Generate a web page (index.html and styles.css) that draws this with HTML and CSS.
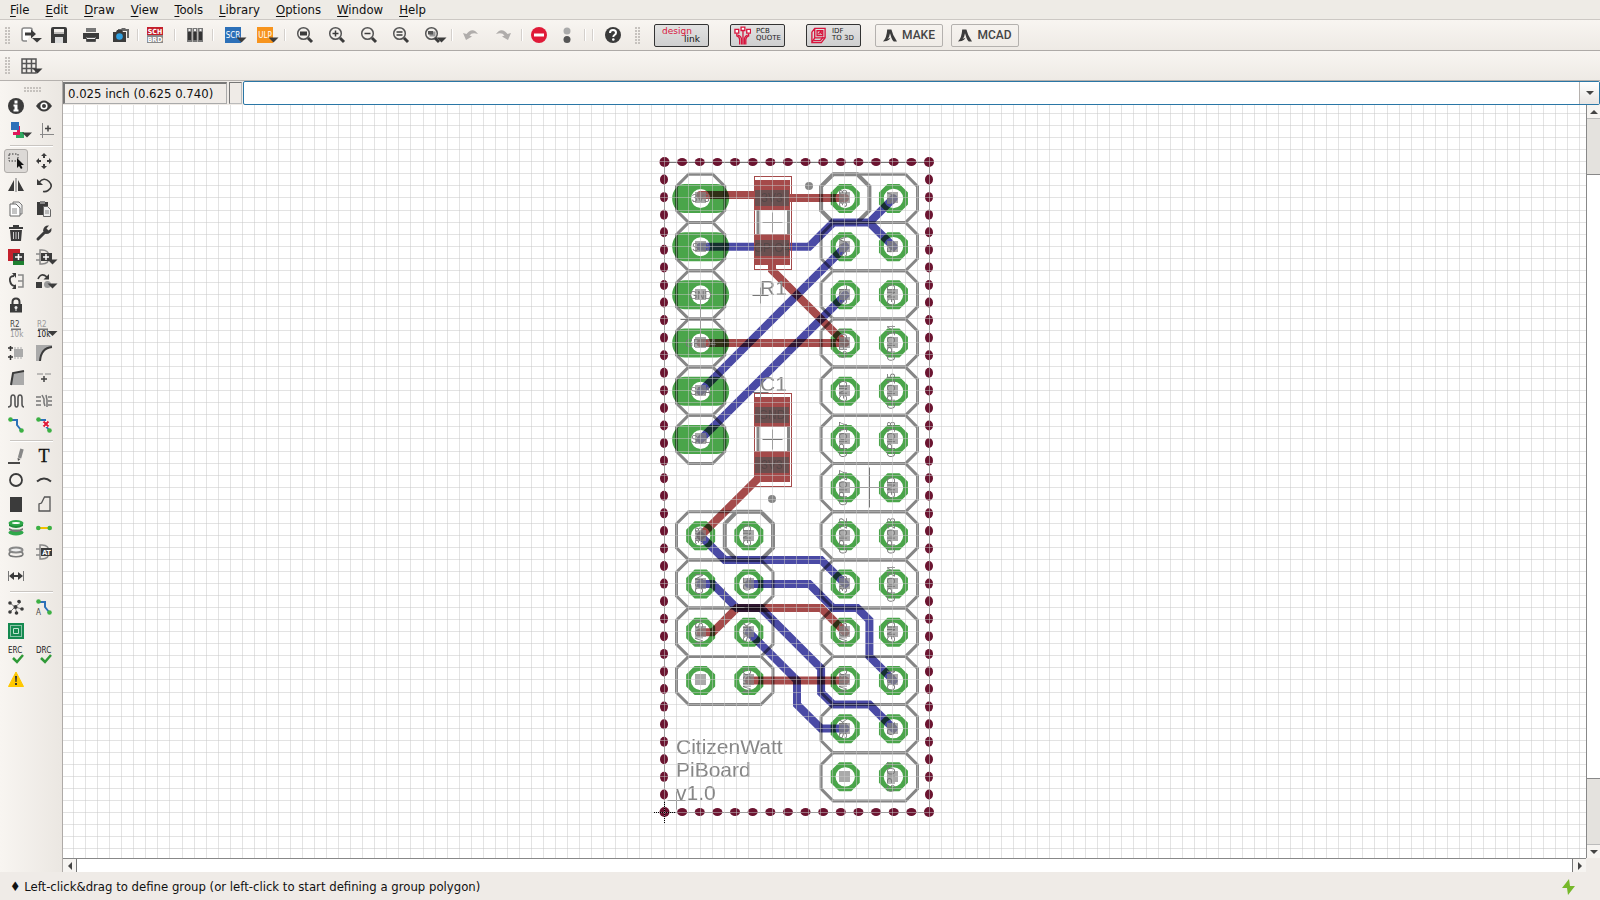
FILE: index.html
```html
<!DOCTYPE html>
<html lang="en">
<head>
<meta charset="utf-8">
<title>Board editor</title>
<link rel="stylesheet" href="styles.css">
</head>
<body>
<div class="app">
  <nav class="menubar">
    <button><u>F</u>ile</button><button><u>E</u>dit</button><button><u>D</u>raw</button><button><u>V</u>iew</button><button><u>T</u>ools</button><button><u>L</u>ibrary</button><button><u>O</u>ptions</button><button><u>W</u>indow</button><button><u>H</u>elp</button>
  </nav>

  <div class="toolbar main">
    <span class="grip"></span>
    <button class="tb narrow" aria-label="Open"><svg class="ic" viewBox="0 0 16 16"><path d="M11 4V2.500Q11 1 9 1H3Q1 1 1 3V12Q1 14 3 14H6" fill="#fff" stroke="#888" stroke-width="1.500"/><path d="M4 5.500h6V2.500l5 4.500-5 4.500V8.500H4z"/><path d="M11 11h10l-5 4.500z"/></svg></button>
    <button class="tb" aria-label="Save"><svg class="ic" viewBox="0 0 16 16"><path d="M2 0h12q2 0 2 2v14H0V2Q0 0 2 0z"/><path d="M3 2h10v5H3z" fill="#f3f0ec"/><path d="M4 10h8v6H4z" fill="#ddd"/><path d="M3 5.500h10v1H3z" fill="#888"/></svg></button>
    <button class="tb" aria-label="Print"><svg class="ic" viewBox="0 0 16 16"><path d="M3 1h10v4H3z" fill="#777"/><path d="M0 6h16v6h-3v-2H3v2H0z"/><path d="M3.500 10.500h9v4h-9z" fill="#eee" stroke="#555"/><path d="M4 12h8v2H4z"/></svg></button>
    <button class="tb narrow" aria-label="Image"><svg class="ic" viewBox="0 0 16 16"><path d="M5 2h3l1-1h3l1 1h3v9h-2V4H5z" fill="#666"/><path d="M0 5h3l1-2h5l1 2h3v10H0z"/><circle cx="6.500" cy="9.500" r="3.300" fill="#2f9fe0"/></svg></button>
    <span class="sep s"></span>
    <button class="tb narrow" aria-label="Schematic and board"><svg class="ic" viewBox="0 0 16 16"><path d="M0 0h16v8H0z" fill="#c4202c"/><path d="M0 8h16v8H0z" fill="#8a8a8a"/><text class="px wh" x="8" y="7">SCH</text><text class="px wh" x="8" y="15">BRD</text></svg></button>
    <span class="sep l"></span>
    <button class="tb narrow" aria-label="Libraries"><svg class="ic" viewBox="0 0 16 16"><path d="M0 1h5v14H0zM5.500 1h5v14h-5zM11 1h5v14h-5z" fill="#777"/><path d="M1 5h3v8H1zM6.500 5h3v8h-3zM12 5h3v8h-3z" fill="#333"/><path d="M1.500 2h2v2h-2zM7 2h2v2H7zM12.500 2h2v2h-2z" fill="#eee"/></svg></button>
    <span class="sep"></span>
    <button class="tb" aria-label="Run script"><svg class="ic" viewBox="0 0 16 16"><path d="M0 0h16v16H0z" fill="#2c70b8"/><text class="pl wh" x="8" y="11">SCR</text><path d="M11.500 10.500h10l-5 5z"/></svg></button>
    <button class="tb" aria-label="Run ULP"><svg class="ic" viewBox="0 0 16 16"><path d="M0 0h16v16H0z" fill="#f7941d"/><text class="pl wh" x="8" y="11">ULP</text><path d="M11.500 10.500h10l-5 5z"/></svg></button>
    <span class="sep"></span>
    <button class="tb" aria-label="Zoom to fit"><svg class="ic" viewBox="0 0 16 16"><circle class="ln" cx="6.500" cy="6.500" r="5.800"/><path d="M3 4.500h7v4H3z"/><path d="M11 11l4 4" stroke="#3b3b3b" stroke-width="3"/></svg></button>
    <button class="tb" aria-label="Zoom in"><svg class="ic" viewBox="0 0 16 16"><circle class="ln" cx="6.500" cy="6.500" r="5.800"/><path d="M3.500 6.500h6M6.500 3.500v6" stroke="#3b3b3b" stroke-width="1.500"/><path d="M11 11l4 4" stroke="#3b3b3b" stroke-width="3"/></svg></button>
    <button class="tb" aria-label="Zoom out"><svg class="ic" viewBox="0 0 16 16"><circle class="ln" cx="6.500" cy="6.500" r="5.800"/><path d="M3.500 6.500h6" stroke="#3b3b3b" stroke-width="1.500"/><path d="M11 11l4 4" stroke="#3b3b3b" stroke-width="3"/></svg></button>
    <button class="tb" aria-label="Redraw"><svg class="ic" viewBox="0 0 16 16"><circle class="ln" cx="6.500" cy="6.500" r="5.800"/><path d="M3.500 5h6M3.500 8h6" stroke="#3b3b3b" stroke-width="1.500"/><path d="M11 11l4 4" stroke="#3b3b3b" stroke-width="3"/></svg></button>
    <button class="tb" aria-label="Zoom select"><svg class="ic" viewBox="0 0 16 16"><circle class="ln" cx="6.500" cy="6.500" r="5.800"/><path d="M4.500 4.500h6v5h-6z" fill="#999"/><path d="M3 4h5v3.500H3z" fill="#555"/><path d="M10 11l4 4" stroke="#3b3b3b" stroke-width="3"/><path d="M11.500 10.500h10l-5 5z"/></svg></button>
    <span class="sep s"></span>
    <button class="tb" aria-label="Undo"><svg class="ic dim" viewBox="0 0 16 16"><path d="M0 6l3 7 6-3.500-2.500-1Q9 5 15 7 11 1 6 4.500 4.500 5.500 3.500 7z"/></svg></button>
    <button class="tb" aria-label="Redo"><svg class="ic dim" viewBox="0 0 16 16"><path d="M16 6l-3 7-6-3.500 2.500-1Q7 5 1 7 5 1 10 4.500 11.500 5.500 12.500 7z"/></svg></button>
    <span class="sep s"></span>
    <button class="tb narrow" aria-label="Stop"><svg class="ic" viewBox="0 0 16 16"><circle cx="8" cy="8" r="8" fill="#e01a38"/><path d="M3 6.500h10v3H3z" fill="#fff"/></svg></button>
    <button class="tb narrow" aria-label="Go"><svg class="ic" viewBox="0 0 16 16"><circle cx="8" cy="4" r="3.500" fill="#aaa"/><circle cx="8" cy="12.500" r="3.500" fill="#555"/></svg></button>
    <span class="sep"></span><span class="sep"></span>
    <button class="tb" aria-label="Help"><svg class="ic" viewBox="0 0 16 16"><circle cx="8" cy="8" r="8"/><path d="M5 6q0-3 3-3t3 2.700Q11 7 9.500 8 8.300 8.800 8.300 10" fill="none" stroke="#fff" stroke-width="2"/><circle cx="8.300" cy="12.500" r="1.300" fill="#fff"/></svg></button>
    <span class="grip right"></span>
    <div class="links">
      <button class="ad design"><span>design</span><span class="lk">link</span></button>
      <button class="ad"><svg class="pcb" viewBox="0 0 18 19"><g fill="none" stroke="#d8143c" stroke-width="1.400"><path d="M3 7v3q3 1 3 4v5M9.500 4v15M15.500 7v3q-3 1-3 4v5"/><path d="M4 9q4 1 4 5v5M14.500 9q-3.500 1-3.500 5v5"/><g fill="#fff"><path d="M1 3h4v4H1zM7.500 0.700h4v3.500h-4zM13.500 3h4v4h-4z"/></g></g></svg><span>PCB<br>QUOTE</span></button>
      <button class="ad"><svg class="pcb" viewBox="0 0 18 19"><g fill="none" stroke="#d8143c" stroke-width="1.400"><path d="M5 2h11v10l-4 5H2V6zM5 2v10H16M5 12l-3 5"/><path d="M7.500 4.500h6v5h-6zM9 8l3-3M12 8V6M4 15h7l3-4"/></g></svg><span>IDF<br>TO 3D</span></button>
      <button class="mk first"><svg viewBox="0 0 15 15" class="alogo"><path d="M0 14Q4 10 4.500 1h4.500l2 6 4 7h-3.500q-1.500-1-2.500-4L7.500 5Q7 9 5 11q2-.5 3-1-1 2.500-4 3.500z"/></svg>MAKE</button>
      <button class="mk"><svg viewBox="0 0 15 15" class="alogo"><path d="M0 14Q4 10 4.500 1h4.500l2 6 4 7h-3.500q-1.500-1-2.500-4L7.500 5Q7 9 5 11q2-.5 3-1-1 2.500-4 3.500z"/></svg>MCAD</button>
    </div>
  </div>

  <div class="toolbar params">
    <span class="grip"></span>
    <button class="tb narrow" aria-label="Grid"><svg class="ic" viewBox="0 0 16 16"><path d="M1 1h14v14H1zM1 5.500h14M1 10.500h14M5.500 1v14M10.500 1v14" fill="none" stroke="#555" stroke-width="1.500"/><path d="M11.500 10.500h10l-5 5z"/></svg></button>
  </div>

  <div class="work">
    <aside class="tools">
      <span class="griph"></span>
      <div class="set">
        <button aria-label="Info"><svg class="ic" viewBox="0 0 16 16"><circle cx="8" cy="8" r="8"/><path d="M6.500 2.500h3v3h-3zM5.500 6.500h4v5h1v2h-5v-2h1v-3h-1z" fill="#fff"/></svg></button>
        <button aria-label="Show"><svg class="ic" viewBox="0 0 16 16"><path d="M0 8q8-11 16 0-8 11-16 0z"/><circle cx="8" cy="8" r="3.600" fill="#fff"/><circle cx="8" cy="8" r="2"/></svg></button>
        <button aria-label="Layers"><svg class="ic" viewBox="0 0 16 16"><path d="M9 10h7v6H8v-3z" fill="#2fa860"/><path d="M5 4h7v9H5z" fill="#e0185c"/><path d="M4 3h5v7H4z" fill="#f3f0ec"/><path d="M3 0h8v8H3z" fill="#2c70b8"/><path d="M14 10.500h10l-5 5z"/></svg></button>
        <button aria-label="Mark"><svg class="ic" viewBox="0 0 16 16"><path d="M6.500 1v15M4 12.500h14" fill="none" stroke="#888"/><path d="M9 6.500h6M12 3.500v6" stroke="#444" stroke-width="1.500"/></svg></button>
      </div>
      <hr>
      <div class="set">
        <button class="on" aria-label="Group"><svg class="ic" viewBox="0 0 16 16"><path d="M1 1h9v7H1z" fill="none" stroke="#333" stroke-dasharray="1.500 1.500"/><path d="M9 5v10l2-2 2 3 1.500-1-1.500-3h3z" fill="#111"/></svg></button>
        <button aria-label="Move"><svg class="ic" viewBox="0 0 16 16"><path d="M8 0l3 3H9v2H7V3H5zM8 16l3-3H9v-2H7v2H5zM0 8l3-3v2h2v2H3v2zM16 8l-3-3v2h-2v2h2v2z"/></svg></button>
        <button aria-label="Mirror"><svg class="ic" viewBox="0 0 16 16"><path d="M0 14L6 3v11zM16 14L10 3v11z"/><path d="M8 1v14" stroke="#999" stroke-width="1.500"/></svg></button>
        <button aria-label="Rotate"><svg class="ic" viewBox="0 0 16 16"><path d="M3 5.500q5-6 10-1t-1 9q-2 1.500-5 1" fill="none" stroke="#3b3b3b" stroke-width="1.600"/><path d="M1 2v6h6z"/></svg></button>
        <button aria-label="Copy"><svg class="ic" viewBox="0 0 16 16"><path d="M5 1h6l3 3v9H5z" fill="#eee" stroke="#777"/><path d="M2 3h6l4 4v8H2z" fill="#fff" stroke="#666"/><path d="M4 8h5M4 10h5M4 12h5" stroke="#888"/></svg></button>
        <button aria-label="Paste"><svg class="ic" viewBox="0 0 16 16"><path d="M1 1h11v13H1z"/><path d="M4 0h5v3H4z" fill="#888"/><path d="M7.500 5.500h4l3 3v7h-7z" fill="#eee" stroke="#666"/><path d="M9 10h4M9 12h4" stroke="#888"/></svg></button>
        <button aria-label="Delete"><svg class="ic" viewBox="0 0 16 16"><path d="M1 2h4V0h6v2h4v2H1zM2 5h12l-1 11H3z"/><path d="M5.500 7v7M8 7v7M10.500 7v7" stroke="#ccc"/></svg></button>
        <button aria-label="Change"><svg class="ic" viewBox="0 0 16 16"><path d="M2 14L9 7" stroke="#3b3b3b" stroke-width="3" stroke-linecap="round"/><path d="M7 5.500Q8 0 13 0.500l-2.500 3 2 2 3-2.500q.500 6-6 6z"/></svg></button>
        <button aria-label="Add"><svg class="ic" viewBox="0 0 16 16"><path d="M0 0h12v12H0z" fill="#c4202c"/><path d="M5 12h11v4H5z" fill="#1e8030"/><path d="M5 4h11v8H5z"/><path d="M7 8h7M10.500 5v6" stroke="#fff" stroke-width="1.500"/></svg></button>
        <button aria-label="Add gate"><svg class="ic" viewBox="0 0 16 16"><path d="M4 1h2q7 0 7 7t-7 7H4zM0 5h4M0 11h4" fill="none" stroke="#888" stroke-width="1.500"/><path d="M5 4h11v8H5z"/><path d="M7 8h6M10 5v6" stroke="#fff" stroke-width="1.500"/><path d="M11.500 10.500h10l-5 5z"/></svg></button>
        <button aria-label="Pin swap"><svg class="ic" viewBox="0 0 16 16"><path d="M6 3Q1 3 2 8t5 5" fill="none" stroke="#3b3b3b" stroke-width="1.800"/><path d="M4 0h4v5zM4 16h4v-5z"/><path d="M10 2h5v12h-5M10 8h5" fill="none" stroke="#888" stroke-width="1.500"/></svg></button>
        <button aria-label="Replace"><svg class="ic" viewBox="0 0 16 16"><path d="M0 9h6v6H0z"/><circle cx="11.500" cy="11.500" r="3.500" fill="#999"/><path d="M2 6q3-7 9-2" fill="none" stroke="#3b3b3b" stroke-width="1.600"/><path d="M13 1v5.500H7.500z"/><path d="M11.500 10.500h10l-5 5z"/></svg></button>
        <button class="solo" aria-label="Lock"><svg class="ic" viewBox="0 0 16 16"><path d="M4.500 8V5q0-3.500 3.500-3.500T11.500 5v3" fill="none" stroke="#3b3b3b" stroke-width="2"/><path d="M2 7h12v8.500H2z"/><circle cx="8" cy="10.500" r="1.500" fill="#eee"/><path d="M7.500 11h1v3h-1z" fill="#eee"/></svg></button>
        <button aria-label="Name"><svg class="ic" viewBox="0 0 16 16"><text class="lb" x="2" y="6">R2</text><path d="M3 7.500h10v1.500H3z" fill="#777"/><text class="lb gr" x="2" y="16">10k</text></svg></button>
        <button aria-label="Value"><svg class="ic" viewBox="0 0 16 16"><text class="lb gr" x="1" y="6">R2</text><path d="M2 7.500h10v1.500H2z" fill="#777"/><text class="lb bk" x="1" y="16">10k</text><path d="M11.500 10h10l-5 5z"/></svg></button>
        <button aria-label="Smash"><svg class="ic" viewBox="0 0 16 16"><path d="M6 4h9v8H6z" fill="#aaa"/><path d="M7 2v12M10 2v12M13 2v12" stroke="#aaa"/><path d="M0 3h5M2.500 1v5M0 12h5M2.500 10v5" stroke="#333" stroke-width="1.500"/></svg></button>
        <button aria-label="Miter"><svg class="ic" viewBox="0 0 16 16"><path d="M0 0h16v2Q5 3 4 16H0z" fill="#aaa"/><path d="M16 2Q5 3 4 16" fill="none" stroke="#3b3b3b" stroke-width="2"/></svg></button>
        <button aria-label="Split"><svg class="ic" viewBox="0 0 16 16"><path d="M3 16L5 4l11-2v14z" fill="#aaa"/><path d="M3 16L5 4l11-2" fill="none" stroke="#3b3b3b" stroke-width="2"/></svg></button>
        <button aria-label="Optimize"><svg class="ic" viewBox="0 0 16 16"><path d="M1 5h6M9 5h6" stroke="#888"/><path d="M5 10h6M8 7v6" stroke="#444" stroke-width="1.500"/></svg></button>
        <button aria-label="Meander"><svg class="ic" viewBox="0 0 16 16"><path d="M0 14q3 0 3-3V5q0-3 2-3t2 3v6q0 3 1.500 3t1.500-3V5q0-3 2-3t2 3v6q0 3 2 3" fill="none" stroke="#555" stroke-width="1.600"/></svg></button>
        <button aria-label="Ripup"><svg class="ic" viewBox="0 0 16 16"><path d="M0 4h5M0 8h5M0 12h5M12 4h4M12 8h4M12 12h4M6 2l2 4v4l1 3M10 2l1 5v7" fill="none" stroke="#777" stroke-width="1.500"/></svg></button>
        <button aria-label="Route"><svg class="ic" viewBox="0 0 16 16"><path d="M3 3h6v5l4 5" fill="none" stroke="#2c70b8" stroke-width="2"/><circle cx="2.500" cy="2.500" r="2.300" fill="#3cb043"/><circle cx="13.500" cy="13.500" r="2.300" fill="#3cb043"/></svg></button>
        <button aria-label="Unroute"><svg class="ic" viewBox="0 0 16 16"><path d="M3 3h6v5l4 5" fill="none" stroke="#2c70b8" stroke-width="2"/><circle cx="2.500" cy="2.500" r="2.300" fill="#3cb043"/><circle cx="13.500" cy="13.500" r="2.300" fill="#3cb043"/><path d="M7 4h6v6H7z" fill="#fff"/><path d="M7.500 4.500l5 5M12.500 4.500l-5 5" stroke="#e01a38" stroke-width="2"/></svg></button>
      </div>
      <hr>
      <div class="set">
        <button aria-label="Line"><svg class="ic" viewBox="0 0 16 16"><path d="M0 15h12" stroke="#111" stroke-width="1.500"/><path d="M14 1l-2.500 9" stroke="#888" stroke-width="3.500"/><path d="M9.500 10l3 1-2.500 2z" fill="#555"/></svg></button>
        <button aria-label="Text"><svg class="ic" viewBox="0 0 16 16"><text class="tt" x="8" y="14">T</text></svg></button>
        <button aria-label="Circle"><svg class="ic" viewBox="0 0 16 16"><circle cx="8" cy="8" r="6" fill="none" stroke="#3b3b3b" stroke-width="1.800"/></svg></button>
        <button aria-label="Arc"><svg class="ic" viewBox="0 0 16 16"><path d="M1 9.500q7-6 14 0" fill="none" stroke="#3b3b3b" stroke-width="2"/></svg></button>
        <button aria-label="Rectangle"><svg class="ic" viewBox="0 0 16 16"><path d="M2 1h12v15H2z"/></svg></button>
        <button aria-label="Polygon"><svg class="ic" viewBox="0 0 16 16"><path d="M8.500 1H14v14H3V8l2.500-1z" fill="none" stroke="#555" stroke-width="1.300"/></svg></button>
        <button aria-label="Via"><svg class="ic" viewBox="0 0 16 16"><path d="M1 3v3q7 4 14 0V3z" fill="#1e8a38"/><ellipse cx="8" cy="12.500" rx="7.500" ry="3" fill="#2fa84a"/><path d="M1 8q7 4 14 0v2q-7 4-14 0z" fill="#777"/><ellipse cx="8" cy="3" rx="7.500" ry="3" fill="#2fa84a"/><ellipse cx="8" cy="3" rx="4" ry="1" fill="#fff"/></svg></button>
        <button aria-label="Signal"><svg class="ic" viewBox="0 0 16 16"><path d="M2 8h12" stroke="#f2c200" stroke-width="2"/><circle cx="2.300" cy="8" r="2.300" fill="#3cb043"/><circle cx="13.700" cy="8" r="2.300" fill="#3cb043"/></svg></button>
        <button aria-label="Hole"><svg class="ic" viewBox="0 0 16 16"><ellipse cx="8" cy="10" rx="7" ry="2.800" fill="none" stroke="#777" stroke-width="1.500"/><ellipse cx="8" cy="6" rx="6.500" ry="2.500" fill="#eee" stroke="#888" stroke-width="2"/></svg></button>
        <button aria-label="Attribute"><svg class="ic" viewBox="0 0 16 16"><path d="M4 1h2q7 0 7 7t-7 7H4zM0 5h4M0 11h4" fill="none" stroke="#888" stroke-width="1.500"/><path d="M5 4h11v8H5z"/><text class="px wh" x="10.500" y="11">AT</text></svg></button>
        <button class="solo" aria-label="Dimension"><svg class="ic" viewBox="0 0 16 16"><path d="M0.500 3v10M15.500 3v10" stroke="#777"/><path d="M1 8l5-4v3h4V4l5 4-5 4V9H6v3z"/></svg></button>
      </div>
      <hr>
      <div class="set">
        <button aria-label="Ratsnest"><svg class="ic" viewBox="0 0 16 16"><path d="M2 4l5 4 6-5M7 8l7 2M7 8l-5 5M7 8l2 6" fill="none" stroke="#777"/><circle cx="7.500" cy="8" r="2"/><circle cx="2" cy="4" r="1.800"/><circle cx="11" cy="2.500" r="1.800"/><circle cx="14" cy="10" r="1.800"/><circle cx="2" cy="13" r="1.800"/><circle cx="8.500" cy="14" r="1.800"/></svg></button>
        <button aria-label="Autorouter"><svg class="ic" viewBox="0 0 16 16"><path d="M3 3h6v5l4 5" fill="none" stroke="#2c70b8" stroke-width="2"/><circle cx="2.500" cy="2.500" r="2.300" fill="#3cb043"/><circle cx="13.500" cy="13.500" r="2.300" fill="#3cb043"/><text class="lb" x="0" y="16">A</text></svg></button>
        <button class="solo" aria-label="Fusion sync"><svg class="ic" viewBox="0 0 16 16"><path d="M0 0h16v16H0z" fill="#158a50"/><path d="M2.500 2.500h11v11h-11z" fill="none" stroke="#fff" stroke-dasharray="1 1"/><path d="M5.500 5.500h5v5h-5z" fill="none" stroke="#bfe3cf"/></svg></button>
        <button aria-label="ERC"><svg class="ic" viewBox="0 0 16 16"><text class="er" x="0" y="6">ERC</text><path d="M5 11l4 4 6-7" fill="none" stroke="#2f9a38" stroke-width="2.500"/></svg></button>
        <button aria-label="DRC"><svg class="ic" viewBox="0 0 16 16"><text class="er" x="0" y="6">DRC</text><path d="M5 11l4 4 6-7" fill="none" stroke="#2f9a38" stroke-width="2.500"/></svg></button>
        <button class="solo" aria-label="Errors"><svg class="ic" viewBox="0 0 16 16"><path d="M8 1l7.500 14.500H.5z" fill="#ffc800" stroke="#ffc800"/><path d="M7 5h2l-.4 6H7.400zM7 12h2v2H7z" fill="#333"/></svg></button>
      </div>
    </aside>

    <main class="editor">
      <div class="cmdrow">
        <output class="coords">0.025 inch (0.625 0.740)</output>
        <span class="chip"></span>
        <div class="combo">
          <input type="text" aria-label="Command">
          <button aria-label="History"><i class="tri down"></i></button>
        </div>
      </div>
      <div class="view">
        <svg class="board" id="board" role="img" aria-label="CitizenWatt PiBoard layout"></svg>
        <div class="vbar"><button aria-label="Scroll up"><i class="tri up"></i></button><span class="trough top"></span><span class="thumb"></span><span class="trough bottom"></span><button aria-label="Scroll down"><i class="tri down"></i></button></div>
        <div class="hbar"><button aria-label="Scroll left"><i class="tri left"></i></button><span class="thumb"></span><button aria-label="Scroll right"><i class="tri rgt"></i></button></div>
      </div>
    </main>
  </div>

  <footer class="status"><span>♦ Left-click&amp;drag to define group (or left-click to start defining a group polygon)</span><svg class="bolt" viewBox="0 0 13 16"><path d="M7 0L0 9h5l1 7 7-9H8z" fill="#76b82a"/></svg></footer>
</div>
<script src="board.js"></script>
</body>
</html>
```
FILE: styles.css
```css
* { box-sizing: border-box; }
body { margin: 0; background: #efebe7; color: #111; font: 13px/16px "DejaVu Sans Condensed", "DejaVu Sans", sans-serif; }
button { font: inherit; color: inherit; background: none; border: 0; padding: 0; margin: 0; display: flex; align-items: center; justify-content: center; }
.app { display: flex; flex-direction: column; height: 100vh; }
.menubar { display: flex; height: 19px; padding-left: 2px; background: #eeebe6; flex: none; }
.menubar button { display: block; padding: 0 8px; line-height: 19px; }
.menubar u { text-underline-offset: 2px; }
.toolbar { display: flex; align-items: center; background: linear-gradient(#f8f5f1, #eeeae5); flex: none; padding-left: 5px; }
.main { height: 32px; border-top: 1px solid #ccc8c4; border-bottom: 1px solid #aeaaa7; }
.params { height: 30px; border-bottom: 1px solid #b5b1ae; }
.grip { width: 5px; height: 17px; margin-right: 5px; background: conic-gradient(#bdb9b5 25%, transparent 0) -1px 1px / 3px 3px; background: radial-gradient(circle at 1px 1px, #c6c2be 0.800px, transparent 1px) 0 0 / 3px 3px; }
.grip.right { margin: 0 14px 0 6px; }
.tb { width: 32px; height: 26px; flex: none; }
.tb.narrow { width: 28px; }
.ic { width: 16px; height: 16px; overflow: visible; fill: #3b3b3b; display: block; }
.ic.dim { fill: #b0adab; }
.ln { fill: #f3f0ec; stroke: #555; stroke-width: 1.5px; }
.sep { width: 8px; height: 12px; flex: none; background: linear-gradient(90deg, #d4d0cc 50%, #fff 50%) center / 2px 100% no-repeat; }
.sep.s { width: 6px; }
.sep.l { width: 12px; }
.px { font: 700 7px "DejaVu Sans Condensed", sans-serif; text-anchor: middle; }
.pl { font: 8px "DejaVu Sans Condensed", sans-serif; text-anchor: middle; }
.wh { fill: #fff; }
.lb { font: 8px "DejaVu Sans Condensed", sans-serif; fill: #444; }
.lb.gr { fill: #999; }
.lb.bk { fill: #111; }
.er { font: 8px "DejaVu Sans Condensed", sans-serif; fill: #222; }
.tt { font: 18px "Liberation Serif", serif; text-anchor: middle; fill: #111; stroke: #111; stroke-width: 0.3px; }
.links { display: flex; align-items: center; }
.ad { width: 55px; height: 23px; margin-right: 21px; border: 1px solid #333; border-radius: 2px; background: linear-gradient(#e2e2e2, #cfcfcf); font: 7px/7px "DejaVu Sans", sans-serif; text-align: left; gap: 5px; color: #222; justify-content: flex-start; padding-left: 3px; }
.ad.design { font-size: 9px; line-height: 8px; color: #d8143c; flex-direction: column; justify-content: center; gap: 0; align-items: flex-start; padding-left: 7px; }
.ad .lk { color: #111; margin-left: 22px; }
.pcb { width: 17px; height: 19px; }
.mk { width: 68px; height: 23px; margin-right: 8px; border: 1px solid #b4b1ae; border-radius: 2px; font: 500 12px "Roboto", sans-serif; color: #444; gap: 5px; }
.mk.first { margin-left: -7px; }
.alogo { width: 14px; height: 15px; fill: #3b3b3b; }
.work { flex: 1; display: flex; min-height: 0; }
.tools { width: 63px; flex: none; padding: 6px 3px 0 2px; background: linear-gradient(90deg, #f8f5f1, #ebe7e2); border-right: 1px solid #aeaaa7; }
.griph { display: block; width: 17px; height: 5px; margin: 0 auto 2px 22px; background: radial-gradient(circle at 1px 1px, #c6c2be 0.800px, transparent 1px) 0 0 / 3px 3px; }
.set { display: grid; grid-template-columns: 28px 28px; grid-auto-rows: 24px; }
.set .solo { grid-column: 1; }
.set .solo + button { grid-column: 1; }
.set button.on { width: 24px; height: 24px; margin-left: 2px; border: 1px solid #b0adaa; border-radius: 3px; background: #dcd9d6; }
.tools hr { height: 2px; border: 0; margin: 3px 6px 2px 8px; background: linear-gradient(#c9c5c1 50%, #fff 50%); }
.editor { flex: 1; min-width: 0; display: flex; flex-direction: column; }
.cmdrow { display: flex; height: 24px; flex: none; }
.coords { width: 164px; margin-top: 1px; height: 22px; border: 1px solid; border-color: #777 #aaa #aaa #777; border-width: 2px 1px 1px 2px; line-height: 19px; padding-left: 3px; }
.chip { width: 13px; height: 22px; margin: 1px 1px 0 2px; border: 1px solid; border-color: #777 #bbb #bbb #777; }
.combo { flex: 1; display: flex; height: 24px; border: 1px solid #2a76a5; border-radius: 2px; background: #fff; }
.combo input { flex: 1; min-width: 0; border: 0; padding: 0 4px; outline: 0; background: transparent; font: inherit; }
.combo button { width: 20px; border-left: 1px solid #b5b1ae; background: linear-gradient(#fff, #e8e5e2); }
.tri { width: 0; height: 0; border: 4px solid transparent; }
.tri.down { border-top-color: #444; border-bottom: 0; }
.tri.up { border-bottom-color: #444; border-top: 0; }
.tri.left { border-right-color: #444; border-left: 0; }
.tri.rgt { border-left-color: #444; border-right: 0; }
.view { flex: 1; min-height: 0; display: grid; grid-template-columns: 1fr 14px; grid-template-rows: 1fr 14px; }
.board { width: 100%; height: 100%; display: block; background: #fff; overflow: hidden; min-height: 0; min-width: 0; isolation: isolate; }
.vbar { display: flex; flex-direction: column; border-left: 1px solid #888; background: #e4e2de; }
.vbar button { height: 13px; background: #f6f4f1; }
.vbar .thumb { flex: 606; background: #fff; border: solid #888; border-width: 1px 0; }
.trough.top { flex: 55; border-top: 1px solid #bbb; }
.trough.bottom { flex: 65; border-bottom: 1px solid #bbb; }
.hbar { display: flex; border-top: 1px solid #888; background: #fff; }
.hbar button { width: 13px; background: #f6f4f1; }
.hbar .thumb { flex: 1; border: solid #777; border-width: 0 1px; }
.status { height: 28px; flex: none; display: flex; align-items: center; justify-content: space-between; padding: 1px 25px 0 10px; }
.bolt { width: 13px; height: 16px; }

.grid { fill: none; stroke: #c8c8c8; stroke-opacity: 0.5; }
.mul { mix-blend-mode: multiply; }
.pad { fill: #4aa54a; fill-rule: evenodd; }
.drill { fill: #868686; fill-opacity: 0.7; }
.drill.clear { fill-opacity: 1; }
.silk { fill: none; stroke: #868686; stroke-width: 3px; }
.silk.thick { stroke-width: 4px; }
.spot { fill: #868686; }
.thin { fill: none; stroke: #777; }
.red { fill: none; stroke: #a54a4a; stroke-width: 8px; stroke-linecap: round; }
.blue { fill: none; stroke: #4a4aa5; stroke-width: 8px; stroke-linecap: round; }
.smd { fill: #a54a4a; }
.body { fill: #6a5050; }
.keep { fill: none; stroke: #a54a4a; }
.edge { fill: #6b1430; }
.origin { fill: none; stroke: #000; stroke-dasharray: 1 1; }
.net { font: 10px "Liberation Sans", sans-serif; fill: #777; text-anchor: middle; }
.net.big { font-size: 12px; fill: #544848; }
.title { font: 21px "Liberation Sans", sans-serif; fill: #868686; }
```
FILE: board.js
```js
const U = 12.05;
const OX = 601.5, OY = 705;
const X = u => OX + u * U;
const Y = v => OY - v * U;
const svg = document.getElementById('board');
let out = '<g transform="translate(0 3)">';
let drills = '';
const path = (cls, pts, close) => {
  out += `<path class="${cls}" d="M${pts.map(p => X(p[0]).toFixed(1) + ' ' + Y(p[1]).toFixed(1)).join('L')}${close ? 'Z' : ''}"/>`;
};
const cell = (cls, l, r, v) => path(cls, [[l + 1, v + 2], [r - 1, v + 2], [r, v + 1], [r, v - 1], [r - 1, v - 2], [l + 1, v - 2], [l, v - 1], [l, v + 1]], true);
const circle = (x, y, r) => `M${x - r} ${y}a${r} ${r} 0 1 0 ${2 * r} 0a${r} ${r} 0 1 0 ${-2 * r} 0z`;
const drill = (x, y) => {
  drills += `<rect class="drill" x="${Math.round(x) - 6}" y="${Math.round(y) - 6}" width="11" height="11"/>`;
};
const pad = (u, v) => {
  const x = X(u), y = Y(v), a = 14.5, b = 6;
  out += `<path class="pad mul" d="M${x - b} ${y - a}h${2 * b}L${x + a} ${y - b}v${2 * b}L${x + b} ${y + a}h${-2 * b}L${x - a} ${y + b}v${-2 * b}z${circle(x, y, 9.7)}"/>`;
  drill(x, y);
};
const longPad = (u, v) => {
  const x = X(u), y = Y(v);
  out += `<path class="pad mul" d="M${x - 16} ${y - 14.5}h32a12.500 14.500 0 0 1 0 29h-32a12.500 14.500 0 0 1 0 -29z${circle(x, y, 9.5)}"/>`;
  drill(x, y);
};
const cross = (x, y, r) => { out += `<path class="thin" d="M${x - r} ${y}h${2 * r}M${x} ${y - r}v${2 * r}"/>`; };
const net = (u, v, s, rot) => {
  const x = X(u), y = Y(v);
  out += `<text class="net" x="${x}" y="${y + (rot ? 2 : 4)}"${rot ? ` transform="rotate(-90 ${x} ${y})"` : ''}>${s}</text>`;
};

/* silkscreen */
for (let v = 31; v <= 51; v += 4) cell('silk', 1, 5, v);
for (let v = 3; v <= 51; v += 4) cell('silk', 13, 21, v);
for (let v = 11; v <= 23; v += 4) cell('silk', 1, 9, v);
cell('silk thick', 13, 17, 51);
cell('silk thick', 5, 9, 23);
out += '<circle class="spot" cx="746" cy="78" r="4"/><circle class="spot" cx="709" cy="391" r="4"/>';

/* pads */
for (let v = 31; v <= 51; v += 4) longPad(3, v);
for (let v = 3; v <= 51; v += 4) { pad(15, v); pad(19, v); }
for (let v = 11; v <= 23; v += 4) { pad(3, v); pad(7, v); }

/* traces */
out += '<path class="red mul" d="M637.500 87H709"/><path class="red mul" d="M718 90H782"/><path class="red mul" d="M709 157v5L782 235"/>';
path('red mul', [[3, 39], [15, 39]]);
path('red mul', [[3, 23], [7.8, 27.8]]);
path('red mul', [[3, 15], [4, 15], [6, 17], [13, 17], [15, 15]]);
path('red mul', [[7, 11], [15, 11]]);
out += `<path class="blue mul" d="M${X(3)} ${Y(47)}L${X(12)} ${Y(47)}L${X(14)} ${Y(49)}L${X(17)} ${Y(49)}L${X(19)} ${Y(51)}M${X(17)} ${Y(49)}L${X(19)} ${Y(47)}"/>`;
path('blue mul', [[3, 35], [15, 47]]);
path('blue mul', [[3, 31], [15, 43]]);
path('blue mul', [[3, 23], [5, 21], [13, 21], [15, 19]]);
path('blue mul', [[7, 19], [12, 19], [14, 17], [16, 17], [17, 16], [17, 13], [19, 11]]);
path('blue mul', [[3, 19], [4, 19], [6, 17], [8, 17], [13, 12], [13, 10], [14, 9], [17, 9], [19, 7]]);
path('blue mul', [[7, 15], [11, 11], [11, 9], [13, 7], [15, 7]]);

/* two SMD parts */
const smd = (y, n1, n2) => {
  out += `<rect class="keep" x="691.500" y="${y + .5}" width="37" height="93"/>
  <path class="silk" d="M695 ${y + 30}v30M725.500 ${y + 30}v30"/>
  <rect class="smd" x="691" y="${y + 4}" width="36" height="30"/><rect class="smd" x="691" y="${y + 58}" width="36" height="31"/>
  <rect class="body" x="692" y="${y + 14}" width="34" height="16"/><rect class="body" x="692" y="${y + 64}" width="34" height="16"/>
  <text class="net big" x="709" y="${y + 26}">${n1}</text><text class="net big" x="709" y="${y + 76}">${n2}</text>`;
  cross(709.5, y + 46.5, 10);
};
smd(68, '3V3', 'GPIO4');
smd(285, 'GND', '3V3');
out += drills;

/* net names */
[['3V3', 51], ['SIG', 47], ['GND', 43], ['GPIO4', 39], ['SDA', 35], ['SCL', 31]].forEach(n => net(3, n[1], n[0]));
['3V3', 'SDA', 'SCL', 'GPIO4', 'GND', 'GPIO17', 'GPIO27', 'GPIO22', '3V3', 'MOSI', 'MISO', 'SCK'].forEach((n, i) => net(15, 51 - 4 * i, n, true));
['5V', '5V', 'GND', 'GPIO14', 'GPIO15', 'GPIO18', 'GND', 'GPIO23', 'GPIO24', 'GND', 'CSN', 'CE', 'GPIO7'].forEach((n, i) => net(19, 51 - 4 * i, n, true));
['3V3', 'CSN', 'MOSI'].forEach((n, i) => net(3, 23 - 4 * i, n, true));
['GND', 'CE', 'SCK', 'MISO'].forEach((n, i) => net(7, 23 - 4 * i, n, true));

cross(637.5, 211.5, 20);
cross(806.5, 379.5, 20);
cross(661.5, 499.5, 20);
cross(697.5, 187.5, 8);
cross(697.5, 284.5, 8);
cross(613.5, 692.5, 9);

/* labels */
out += '<text class="title" x="697" y="187">R1</text><text class="title" x="697" y="283">C1</text>';
['CitizenWatt', 'PiBoard', 'v1.0'].forEach((t, i) => { out += `<text class="title" x="613" y="${646 + 23 * i}">${t}</text>`; });

/* board edge */
out += `<path class="thin" d="M601.500 54.500H866.500V704.500H601.500z"/>`;
for (let i = 0; i <= 15; i++) for (const y of [54, 704]) {
  out += `<ellipse class="edge" cx="${601.5 + i * 264.5 / 15}" cy="${y}" rx="5" ry="${i % 15 ? 4 : 5}"/>`;
}
for (let i = 1; i < 37; i++) for (const x of [601, 866]) {
  out += `<ellipse class="edge" cx="${x}" cy="${54 + i * 650 / 37}" rx="4" ry="5"/>`;
}

/* grid over everything */
let g = '';
for (let i = -50; i < 260; i++) g += `M${Math.round(X(i)) - .5} -9V3000`;
for (let j = -150; j < 60; j++) g += `M0 ${Math.round(Y(j)) - .5}H4000`;
out += `<path class="grid" d="${g}"/><path class="origin" d="M591 704.500h21M601.500 694v21"/></g>`;
svg.innerHTML = out;
```
